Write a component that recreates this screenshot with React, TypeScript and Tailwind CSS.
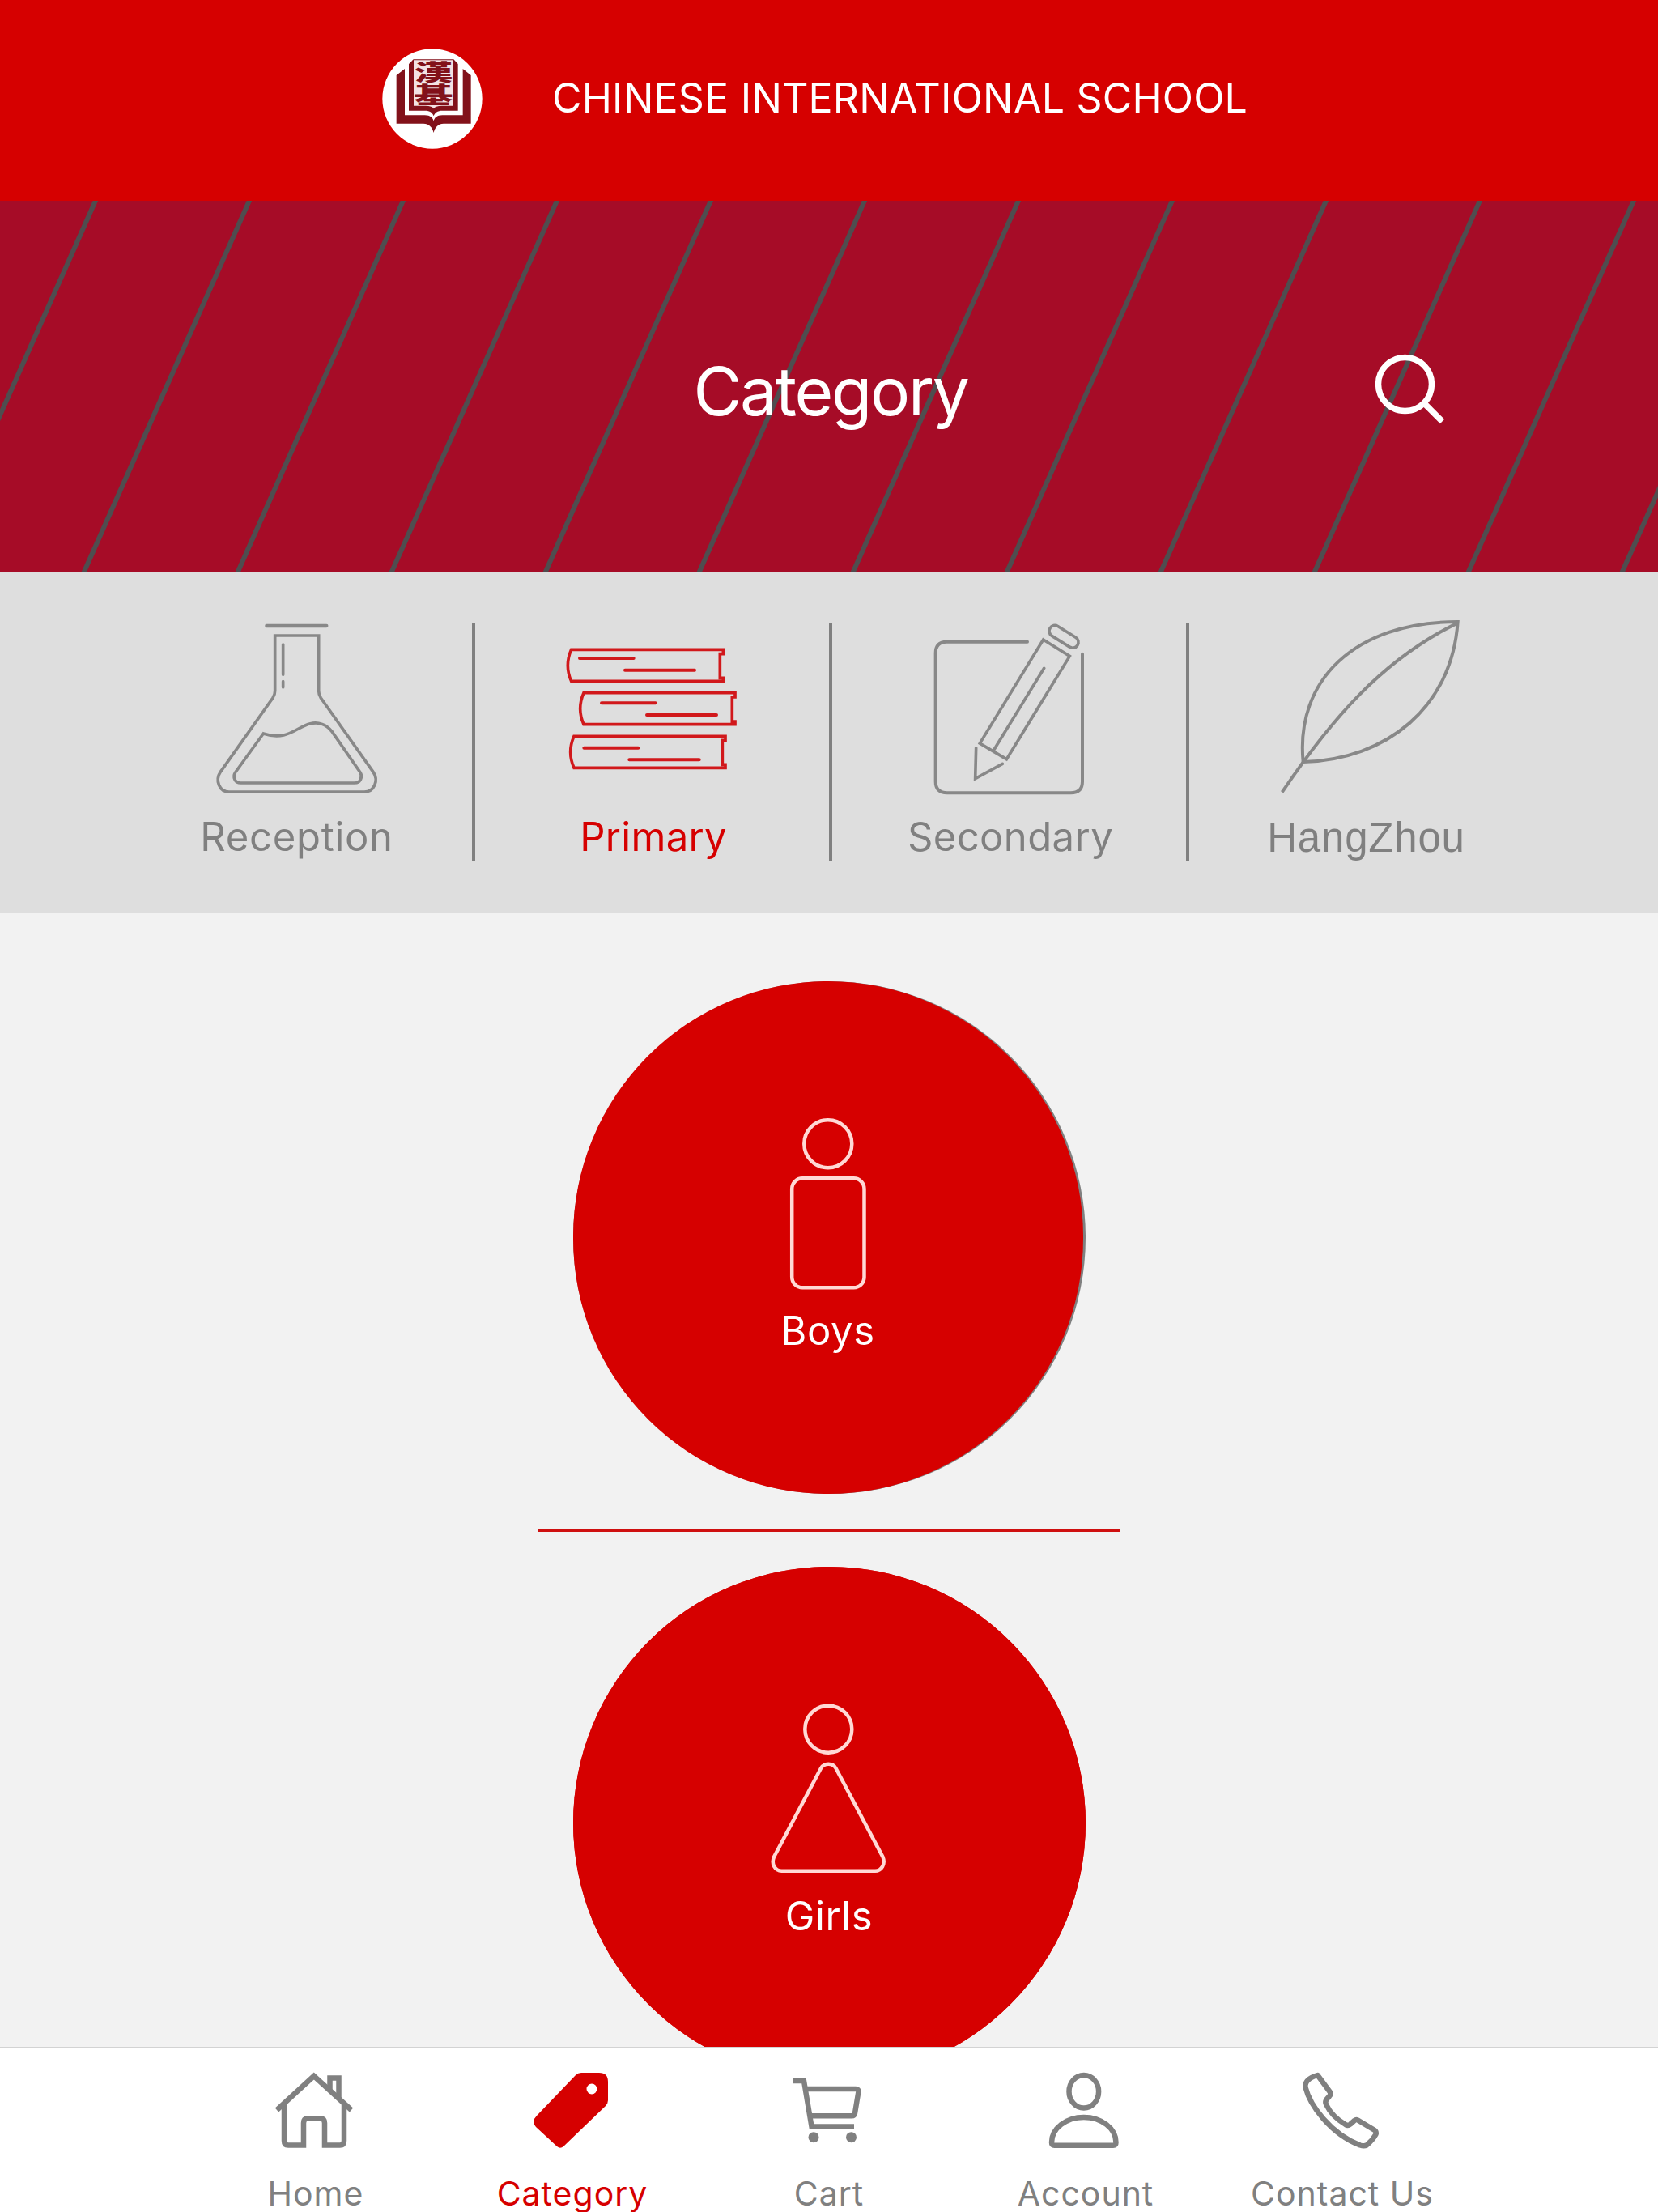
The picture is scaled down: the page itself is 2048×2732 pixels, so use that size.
import type { ReactNode } from "react"
import clsx from "clsx"

function SchoolLogo() {
  return (
    <svg viewBox="97 88 372 372" className="size-[124px]">
      <circle cx="283" cy="274" r="185" fill="#fff" />
      <g fill="#82111a">
        <path d="M150 187 181 163V335H255C275 335 286 345 288 358 290 345 300 335 320 335H396V163L426 187V366H325C305 366 292 380 288 400 284 380 270 366 250 366H150Z" />
        <path d="M196 145 213 128H362L378 145V318H320C302 318 292 326 288 338 284 326 274 318 256 318H196Z" />
      </g>
      <path d="M214 131H360V300H318C302 300 292 304 288 311 284 304 274 300 258 300H214Z" fill="#f3e2e4" />
      <text
        transform="translate(287 209) scale(1.58 .94)"
        fill="#82111a"
        fontFamily="'Noto Sans CJK TC', sans-serif"
        fontWeight="900"
        fontSize="92"
        textAnchor="middle"
      >
        <tspan x="0">漢</tspan>
        <tspan x="0" dy="87">
          基
        </tspan>
      </text>
    </svg>
  )
}

function Header() {
  return (
    <header className="flex h-[248px] shrink-0 items-center bg-[#d60000] pb-[5px] pl-[472px]">
      <SchoolLogo />
      <h1 className="mb-[2px] ml-[86px] text-[50px] leading-none tracking-[0.200px] whitespace-nowrap text-white">
        CHINESE INTERNATIONAL SCHOOL
      </h1>
    </header>
  )
}

const stripes = Array.from({ length: 13 }, (_, i) => 118 + i * 190)

function Banner() {
  return (
    <section className="relative flex h-[458px] shrink-0 items-center justify-center bg-[#a60c27]">
      <svg
        viewBox="0 0 2048 458"
        className="absolute inset-0 h-full w-full"
        stroke="#4f4d4f"
        strokeWidth="6"
      >
        {stripes.map((x) => (
          <line key={x} x1={x + 4.4} y1="-10" x2={x - 208.5} y2="468" />
        ))}
      </svg>
      <h2 className="relative pt-[13px] pl-1 text-[82px] leading-none tracking-[-2.300px] text-white">
        Category
      </h2>
      <svg
        viewBox="0 0 90 90"
        className="absolute top-[187px] left-[1696px] size-[90px]"
        fill="none"
        stroke="#fff"
        strokeWidth="7.5"
      >
        <circle cx="39.5" cy="39.5" r="33" />
        <path d="M62.500 62.500 85.500 85.500" />
      </svg>
    </section>
  )
}

function FlaskIcon() {
  return (
    <svg
      viewBox="75 75 720 660"
      className="h-[220px] w-[240px]"
      fill="none"
      stroke="#888"
      strokeWidth="11"
      strokeLinecap="round"
    >
      <path d="M328 99H550" strokeWidth="13" />
      <path d="M359 135H521V340Q521 354 529 366L723 640C745 672 726 714 690 714H189C153 714 136 672 157 640L351 366Q359 354 359 340Z" />
      <path d="M389 168V280M389 305V326" />
      <path d="M316 498 212 642C202 658 209 681 232 681H654C677 681 684 658 675 642L570 490C550 464 520 454 490 461C440 472 405 528 316 498Z" />
    </svg>
  )
}

function BooksIcon() {
  return (
    <svg
      viewBox="78 75 720 660"
      className="h-[220px] w-[240px]"
      fill="none"
      stroke="#d1181b"
      strokeWidth="11"
    >
      <path d="M137 187H700V203H688V292H700V304H137Q111 246 137 187Z" />
      <path d="M183 347H744V363H733V453H744V464H183Q157 406 183 347Z" />
      <path d="M147 508H708V523H697V613H708V625H147Q121 567 147 508Z" />
      <g strokeLinecap="round" strokeWidth="12">
        <path d="M168 219H368M336 263H594" />
        <path d="M249 385H449M417 429H675" />
        <path d="M184 551H385M352 595H611" />
      </g>
    </svg>
  )
}

function PencilIcon() {
  return (
    <svg
      viewBox="111 75 720 660"
      className="h-[220px] w-[240px]"
      fill="none"
      stroke="#888"
      strokeWidth="11"
      strokeLinecap="round"
    >
      <path d="M537 158H238Q197 158 197 200V676Q197 718 240 718H698Q741 718 741 676V203" strokeWidth="12" />
      <path d="M596 150 694 211 460 593 361 534Z" />
      <path d="M599 256 412 560" />
      <path d="M347 551 344 665 445 610" />
      <rect x="612" y="118" width="120" height="42" rx="21" transform="rotate(32 672 139)" />
    </svg>
  )
}

function LeafIcon() {
  return (
    <svg
      viewBox="204 75 720 660"
      className="h-[220px] w-[240px]"
      fill="none"
      stroke="#888"
      strokeWidth="12"
    >
      <path d="M329 603C300 300 520 84 902 84C880 400 640 594 329 603Z" />
      <path d="M251 715C430 450 620 225 902 88" />
    </svg>
  )
}

interface CategoryTabProps {
  icon: ReactNode
  label: string
  className: string
  last?: boolean
}

function CategoryTab({ icon, label, className, last }: CategoryTabProps) {
  return (
    <>
      <button
        className={clsx(
          "flex w-[437px] shrink-0 flex-col items-center whitespace-nowrap",
          className
        )}
      >
        {icon}
        <span className="mt-[19px] leading-[60px]">{label}</span>
      </button>
      {!last && <div className="mt-[5px] h-[293px] w-1 shrink-0 bg-[#808080]" />}
    </>
  )
}

function CategoryTabs() {
  return (
    <nav className="flex h-[422px] shrink-0 bg-[#dedede] pt-[59px] pl-[146px]">
      <CategoryTab
        icon={<FlaskIcon />}
        label="Reception"
        className="text-[49px] tracking-[0.700px] text-[#808080] [&>span]:pl-1"
      />
      <CategoryTab
        icon={<BooksIcon />}
        label="Primary"
        className="text-[49px] tracking-[0.300px] text-[#d60000] [&>span]:pl-[3px]"
      />
      <CategoryTab
        icon={<PencilIcon />}
        label="Secondary"
        className="text-[49px] tracking-[0.400px] text-[#808080] [&>span]:pl-[3px]"
      />
      <CategoryTab
        icon={<LeafIcon />}
        label="HangZhou"
        className="font-['Liberation_Sans',sans-serif] text-[51px] tracking-[0.800px] text-[#808080] [&>span]:mt-5"
        last
      />
    </nav>
  )
}

function BoyIcon() {
  return (
    <svg viewBox="-1.5 0 200 230" className="h-[230px] w-[200px]" fill="none" stroke="#ffd9d5" strokeWidth="4.5">
      <circle cx="98.300" cy="37.700" r="29.500" />
      <rect x="53.700" y="80.300" width="89.300" height="135" rx="13" />
    </svg>
  )
}

function GirlIcon() {
  return (
    <svg viewBox="0 0 200 230" className="h-[230px] w-[200px]" fill="none" stroke="#ffd9d5" strokeWidth="4.5">
      <circle cx="99.300" cy="37.700" r="29" />
      <path d="M90 86C94 79 104.500 79 108.500 86L166.500 195.500C170 204 165 212.700 157 212.700H41.500C33 212.700 28.500 204 32 195.500Z" />
    </svg>
  )
}

function GenderButton({ icon, label, shadow }: { icon: ReactNode; label: string; shadow?: boolean }) {
  return (
    <button
      className={clsx(
        "size-[633px] shrink-0 rounded-full",
        shadow ? "bg-[#808080] pr-[3px]" : "bg-[#d60000]"
      )}
    >
      <div className="flex h-full flex-col items-center rounded-full bg-[#d60000] pt-[163px] text-[49px] text-white">
        {icon}
        <span className="mt-[9px] leading-[60px] tracking-[0.600px]">{label}</span>
      </div>
    </button>
  )
}

function HomeIcon() {
  return (
    <>
      <path d="M12 56 57.800 14 104 56" />
      <path d="M21 48V94Q21 99.500 26 99.500H45V72Q45 66.500 50 66.500H66Q71 66.500 71 72V99.500H90Q95 99.500 95 94V48" />
      <path d="M77.500 32V16.500H88.500V42" />
    </>
  )
}

function TagIcon() {
  return (
    <path
      d="M71 10H93Q104 10 104 21V44Q104 48 101 51L49 101Q45 104.500 41 101L15 77Q9 70 16 63L64 13Q67 10 71 10ZM84 23.500A6.500 6.500 0 1 0 84 36.500 6.500 6.500 0 1 0 84 23.500Z"
      fill="currentColor"
      fillRule="evenodd"
      stroke="none"
    />
  )
}

function CartIcon() {
  return (
    <>
      <path d="M15.500 20H29L38.500 76.500H91" />
      <path d="M32 30H93Q97 30 96.300 34L92 60Q91.500 63.300 88 63.300H37" />
      <g fill="currentColor" stroke="none">
        <circle cx="41" cy="89.700" r="6.500" />
        <circle cx="87.500" cy="89.700" r="6.500" />
      </g>
    </>
  )
}

function AccountIcon() {
  return (
    <>
      <ellipse cx="57.800" cy="33.300" rx="18.300" ry="20.300" />
      <path d="M18 96A39.700 31 0 0 1 97.500 96Q97.500 99.700 94 99.700H21.500Q18 99.700 18 96Z" />
    </>
  )
}

function PhoneIcon() {
  return (
    <path
      d="M29.500 13 45 34Q46 37 44 39L40.500 43Q38.500 46 40 49Q47 64 64 74Q67 76 70 73.500L75 69Q77.500 67 80 69L100 81Q102.500 83 101.500 86Q97 94 90 99.500Q87 101 82 99.500C45 85 20 50 14.500 28Q13 18 29.500 13Z"
      strokeLinejoin="round"
    />
  )
}

const navItems = [
  { label: "Home", icon: <HomeIcon /> },
  { label: "Category", icon: <TagIcon />, active: true },
  { label: "Cart", icon: <CartIcon /> },
  { label: "Account", icon: <AccountIcon /> },
  { label: "Contact Us", icon: <PhoneIcon /> },
]

function BottomNav() {
  return (
    <nav className="flex h-[204px] shrink-0 justify-center border-t-2 border-[#d3d3d3] bg-white pt-5">
      {navItems.map(({ label, icon, active }) => (
        <button
          key={label}
          className={clsx(
            "flex w-[317px] flex-col items-center whitespace-nowrap",
            active ? "text-[#d60000]" : "text-[#808080]"
          )}
        >
          <svg
            viewBox="0 0 120 110"
            className="h-[110px] w-[120px] shrink-0"
            fill="none"
            stroke="currentColor"
            strokeWidth="6.5"
          >
            {icon}
          </svg>
          <span className="mt-6 text-[41px] leading-[50px] tracking-[1px]">{label}</span>
        </button>
      ))}
    </nav>
  )
}

export default function App() {
  return (
    <div className="flex h-[2732px] w-[2048px] flex-col overflow-hidden bg-[#f2f2f2] font-['Inter',sans-serif]">
      <Header />
      <Banner />
      <CategoryTabs />
      <main className="flex min-h-0 flex-1 flex-col items-center overflow-hidden pt-[84px]">
        <GenderButton icon={<BoyIcon />} label="Boys" shadow />
        <div className="mt-[43px] mb-[43px] h-1 w-[719px] shrink-0 bg-[#cf1010]" />
        <GenderButton icon={<GirlIcon />} label="Girls" />
      </main>
      <BottomNav />
    </div>
  )
}
